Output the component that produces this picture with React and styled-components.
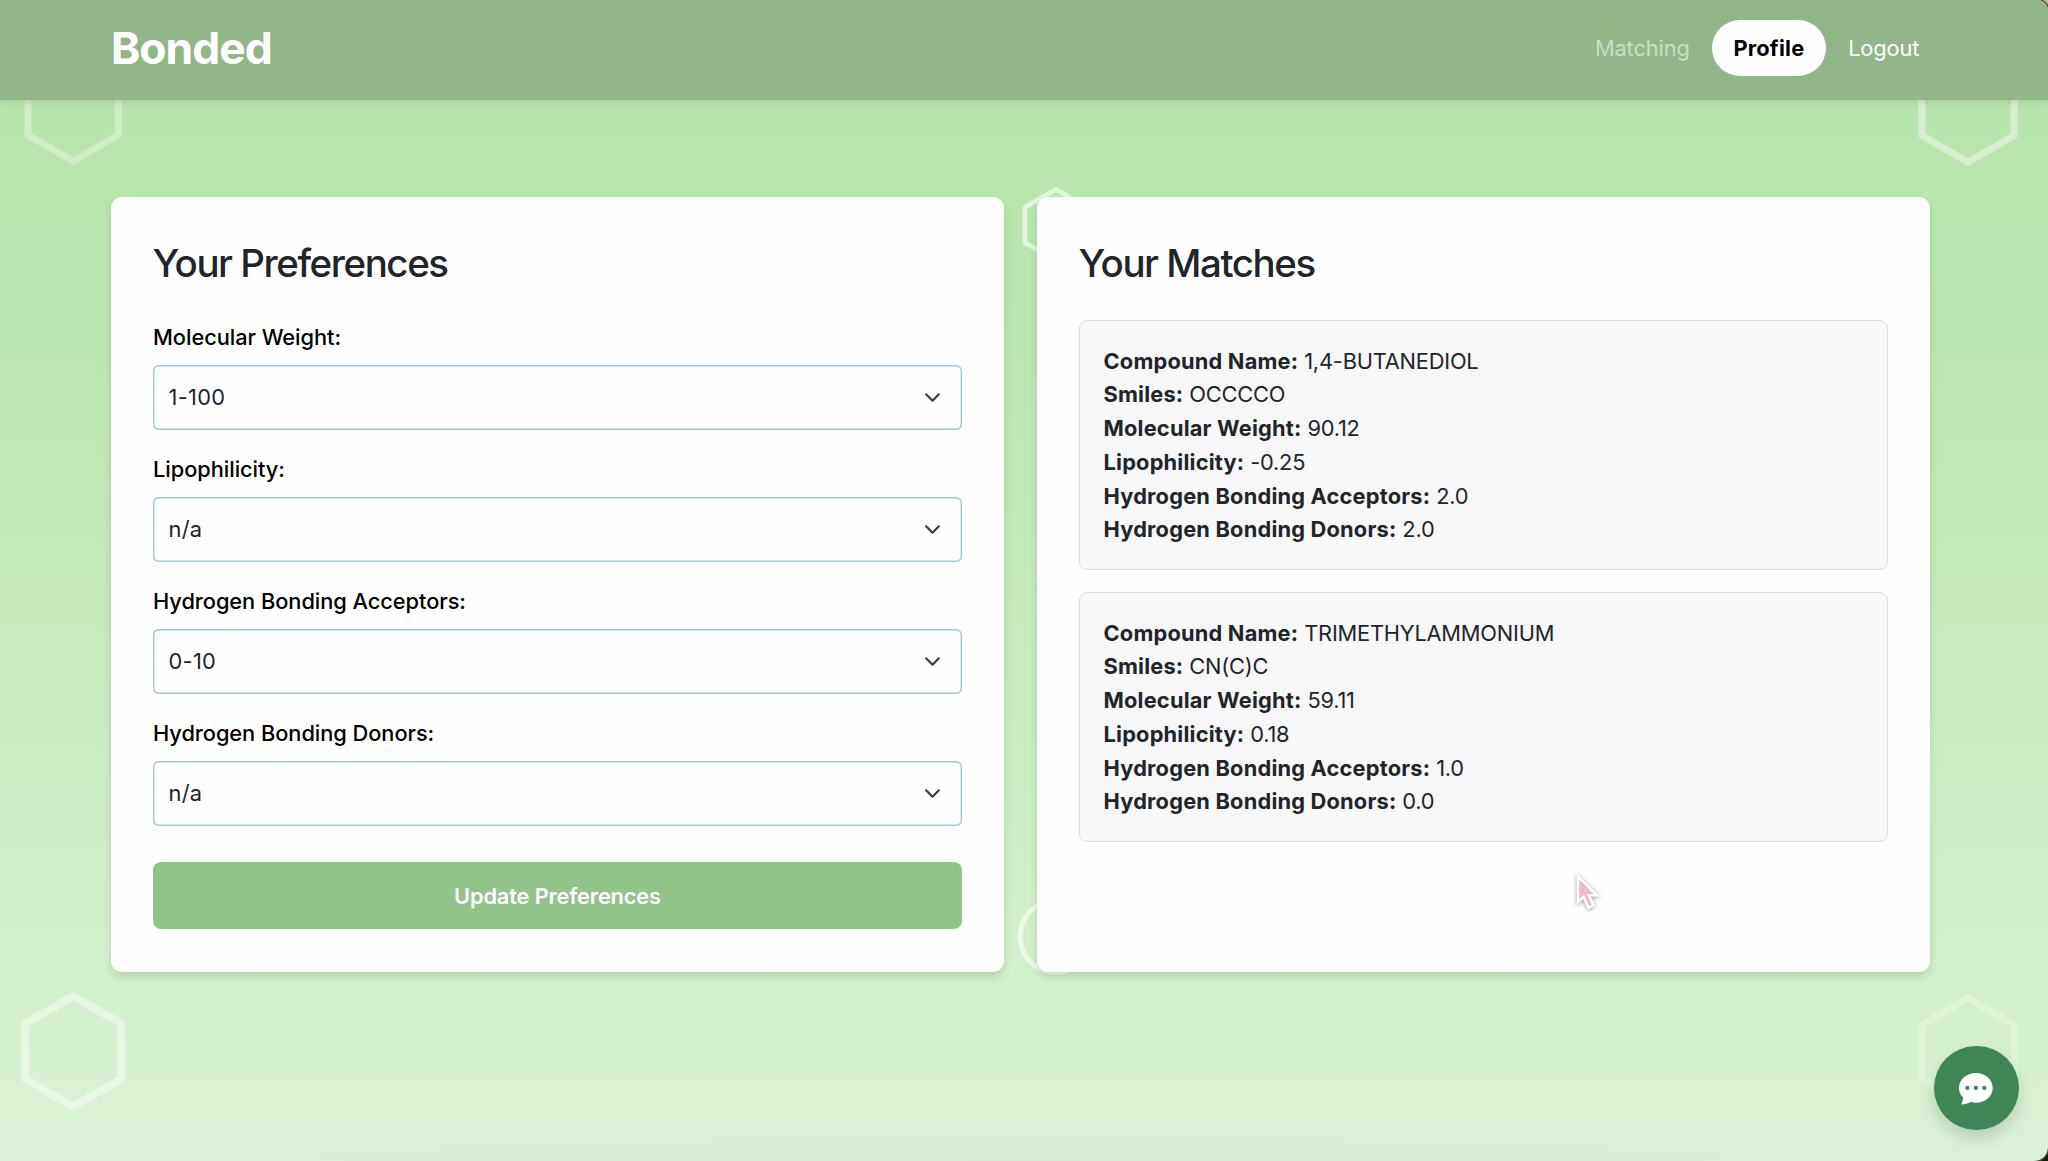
import React, { useState } from 'react'
import styled, { createGlobalStyle } from 'styled-components';
import { BsChatDotsFill } from 'react-icons/bs';

const GlobalStyle = createGlobalStyle`
* {
    box-sizing : border-box;
}
body {
    margin : 0;
    overflow : hidden;
    background : linear-gradient(180deg, #bdb9ab 0%, #bdb9ab 50%, #1b190d 50%, #1b190d 100%);
    font-family : Inter, 'Liberation Sans', sans-serif;
    font-size : 21.8px;
    line-height : 33.75px;
    color : #212529;
}
`;

const preferences = [
    { name: 'weight', label: 'Molecular Weight:', value: '1-100' },
    { name: 'lipo', label: 'Lipophilicity:', value: 'n/a' },
    { name: 'acceptors', label: 'Hydrogen Bonding Acceptors:', value: '0-10' },
    { name: 'donors', label: 'Hydrogen Bonding Donors:', value: 'n/a' },
]

const matches = [
    { name: '1,4-BUTANEDIOL', smiles: 'OCCCCO', weight: '90.12', lipo: '-0.25', acceptors: '2.0', donors: '2.0' },
    { name: 'TRIMETHYLAMMONIUM', smiles: 'CN(C)C', weight: '59.11', lipo: '0.18', acceptors: '1.0', donors: '0.0' },
]

// flat sided hexagon, point at the top
function hexPoints(cx, cy, r) {
    const w = r * 0.872
    return [[0, -r], [w, -r / 2], [w, r / 2], [0, r], [-w, r / 2], [-w, -r / 2]]
        .map(([x, y]) => `${cx + x},${cy + y}`)
        .join(' ')
}

function Shapes() {
    return (
        <Backdrop viewBox='0 0 2048 1161'>
            <polygon points={hexPoints(73.2, 109, 52)} strokeWidth='7' opacity='0.32' />
            <polygon points={hexPoints(1968, 109, 53)} strokeWidth='7' opacity='0.42' />
            <polygon points={hexPoints(73.2, 1051.3, 55.2)} strokeWidth='8' opacity='0.46' />
            <polygon points={hexPoints(1968, 1051.3, 53)} strokeWidth='7' opacity='0.28' />
            <polygon points={hexPoints(1056, 225, 35.6)} strokeWidth='4.6' opacity='0.6' />
            <circle cx='1056' cy='936.5' r='36' strokeWidth='5' opacity='0.6' />
        </Backdrop>
    )
}

function Preference({ label, value }) {
    return (
        <Field>
            <Label>{label}</Label>
            <Select>
                <Value>{value}</Value>
                <svg width='17' height='17' viewBox='0 0 16 16' fill='none' stroke='#343a40' strokeWidth='2' strokeLinecap='round' strokeLinejoin='round'>
                    <path d='m2 5 6 6 6-6' />
                </svg>
            </Select>
        </Field>
    )
}

function Match({ match }) {
    return (
        <MatchCard>
            <p><strong>Compound Name:</strong> {match.name}</p>
            <p><strong>Smiles:</strong> {match.smiles}</p>
            <p><strong>Molecular Weight:</strong> {match.weight}</p>
            <p><strong>Lipophilicity:</strong> {match.lipo}</p>
            <p><strong>Hydrogen Bonding Acceptors:</strong> {match.acceptors}</p>
            <p><strong>Hydrogen Bonding Donors:</strong> {match.donors}</p>
        </MatchCard>
    )
}

function App() {
    const [page, setPage] = useState('Profile')
    return (
        <Page>
            <GlobalStyle />
            <Shapes />
            <Navbar>
                <Brand>Bonded</Brand>
                <Links>
                    <NavLink $muted>Matching</NavLink>
                    <NavLink $active={page === 'Profile'} onClick={() => setPage('Profile')}>Profile</NavLink>
                    <NavLink>Logout</NavLink>
                </Links>
            </Navbar>

            <Content>
                <Panel>
                    <Title>Your Preferences</Title>
                    {preferences.map(p => <Preference key={p.name} label={p.label} value={p.value} />)}
                    <UpdateButton>Update Preferences</UpdateButton>
                </Panel>
                <Panel>
                    <Title>Your Matches</Title>
                    <MatchList>
                        {matches.map(m => <Match key={m.name} match={m} />)}
                    </MatchList>
                </Panel>
            </Content>

            <ChatButton>
                <BsChatDotsFill size={33.75} />
            </ChatButton>
            <Pointer viewBox='0 0 36 48'>
                <path d='M8 6.5 L8 32 L13.6 27 L18.4 37.6 L23.4 35.4 L18.8 25.2 L27 25.2 Z' />
            </Pointer>
        </Page>
    )
}

const Page = styled.div`
    position : relative;
    height : 1161px;
    overflow : hidden;
    border-radius : 0 11px 14px 0;
    box-shadow : 0 0 0 1.5px #4a4a42;
    background :
        radial-gradient(ellipse 900px 30px at 50% 100%, rgba(120, 140, 110, 0.07), transparent),
        linear-gradient(180deg, #b5e5a9 0%, #bbe7b0 28%, #c6ebbc 55%, #d3f0cc 86%, #daf3d6 97%, #daf2d6 100%);
`;

const Backdrop = styled.svg`
    position : absolute;
    top : 0;
    left : 0;
    width : 2048px;
    height : 1161px;
    fill : none;
    stroke : white;
    stroke-linejoin : round;
`;

const Navbar = styled.nav`
    position : relative;
    height : 99.5px;
    padding : 0 128.8px 4px 111px;
    display : flex;
    align-items : center;
    justify-content : space-between;
    background :
        radial-gradient(ellipse 80px 50px at 73px 100%, rgba(152, 178, 136, 0.4), transparent),
        radial-gradient(ellipse 80px 50px at 1968px 100%, rgba(152, 178, 136, 0.4), transparent),
        #91b788;
    box-shadow : 0 2px 6px rgba(0, 0, 0, 0.13);
`;

const Brand = styled.div`
    padding-top : 3px;
    font-size : 44.4px;
    font-weight : 700;
    letter-spacing : -1px;
    color : white;
`;

const Links = styled.div`
    display : flex;
    align-items : center;
    gap : 22.5px;
`;

const NavLink = styled.a`
    padding : ${p => p.$active ? '12.25px 21.3px 10.25px' : '12.25px 0 10.25px'};
    border-radius : 28px;
    background : ${p => p.$active ? 'white' : 'transparent'};
    color : ${p => p.$active ? 'black' : p.$muted ? '#c8dfc3' : 'white'};
    font-weight : ${p => p.$active ? 700 : 400};
    letter-spacing : ${p => p.$active ? '0.2px' : '-0.13px'};
    cursor : pointer;
`;

const Content = styled.main`
    position : relative;
    margin : 97.5px 118px 0 111px;
    display : flex;
    gap : 33px;
`;

const Panel = styled.section`
    flex : 1;
    height : 775px;
    padding : 42px;
    display : flex;
    flex-direction : column;
    background : #fefefe;
    border-radius : 11px;
    box-shadow : 0 5px 9px rgba(0, 0, 0, 0.12);
`;

const Title = styled.h2`
    margin : 1px 0 32.75px -0.4px;
    font-size : 38.5px;
    line-height : 47.25px;
    font-weight : 500;
    letter-spacing : -1.45px;
`;

const Field = styled.div`
    margin-bottom : 22.5px;
`;

const Label = styled.div`
    padding-top : 1px;
    margin-bottom : 10px;
    font-weight : 500;
    letter-spacing : -0.05px;
    color : black;
`;

const Select = styled.div`
    height : 64.75px;
    padding : 0 21px 0 15.5px;
    display : flex;
    align-items : center;
    justify-content : space-between;
    border-radius : 5.6px;
    box-shadow : inset 0 0 0 1.4px #a0c6da;
`;

const Value = styled.span`
    padding-top : 2px;
    letter-spacing : 0.3px;
`;

const UpdateButton = styled.button`
    height : 67px;
    margin-top : 14px;
    padding : 2px 0 0;
    border : 0;
    border-radius : 8px;
    background : #91c489;
    color : white;
    font : inherit;
    font-weight : 600;
    letter-spacing : -0.15px;
`;

const MatchList = styled.div`
    display : flex;
    flex-direction : column;
    gap : 22.5px;
`;

const MatchCard = styled.div`
    padding : 23.5px 22.5px 21.5px 23.5px;
    border : 1px solid #dcdddf;
    border-radius : 8px;
    background : #f7f7f7;
    letter-spacing : -0.2px;

    p {
        margin : 0;
    }
    strong {
        font-weight : 700;
        letter-spacing : 0.2px;
    }
`;

const ChatButton = styled.button`
    position : absolute;
    left : 1934px;
    top : 1045.5px;
    width : 84.5px;
    height : 84.5px;
    padding : 0;
    display : flex;
    align-items : center;
    justify-content : center;
    border : 0;
    border-radius : 50%;
    background : #3f8558;
    color : white;
    box-shadow : 0 8px 18px rgba(0, 0, 0, 0.16);
`;

const Pointer = styled.svg`
    position : absolute;
    left : 1569.5px;
    top : 870px;
    width : 36px;
    height : 48px;
    fill : #f1b6cb;
    stroke : white;
    stroke-width : 2.6;
    filter : drop-shadow(0 1px 2px rgba(0, 0, 0, 0.4));
`;

export default App;
